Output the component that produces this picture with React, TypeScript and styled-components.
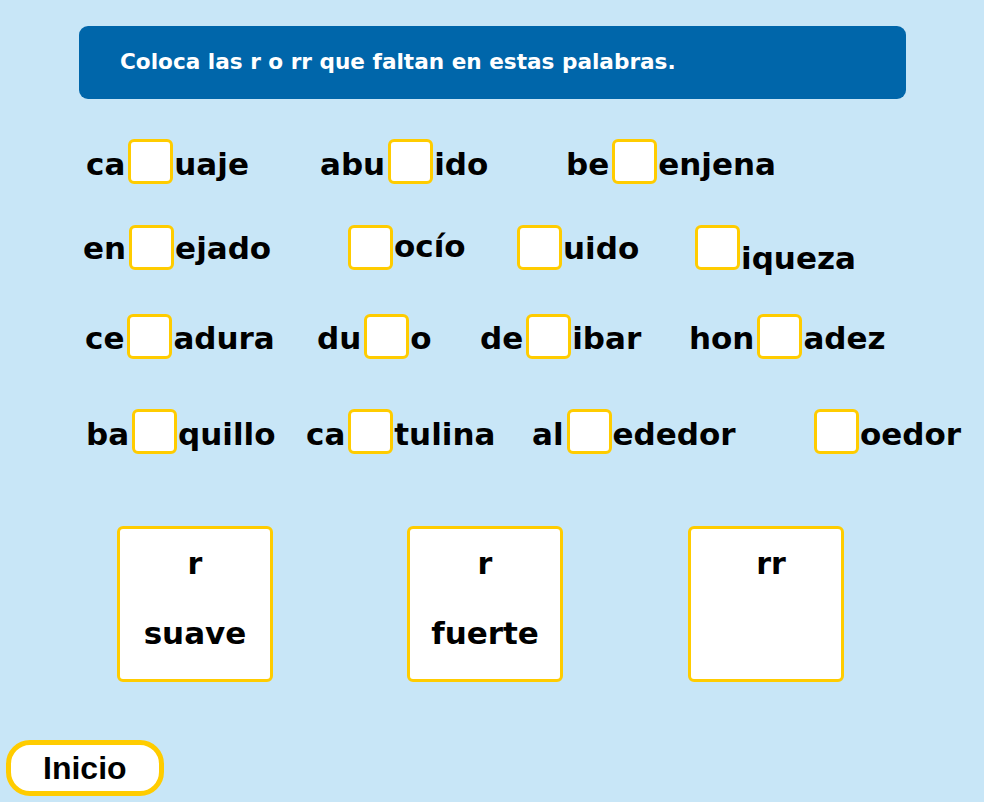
import React from 'react'
import styled, { createGlobalStyle } from 'styled-components'

const GlobalStyle = createGlobalStyle`
  html, body {
    margin: 0;
    padding: 0;
    background: #c8e6f7;
  }
  body {
    font-family: 'DejaVu Sans', Verdana, sans-serif;
  }
`

interface Piece {
  before?: string
  after?: string
  lift?: number
}

interface RowData {
  top: number
  pad: number
  cols: string
  words: Piece[]
}

const rows: RowData[] = [
  {
    top: 40,
    pad: 86,
    cols: '234px 246px auto',
    words: [
      { before: 'ca', after: 'uaje' },
      { before: 'abu', after: 'ido' },
      { before: 'be', after: 'enjena' },
    ],
  },
  {
    top: 41,
    pad: 83,
    cols: '262px 169px 178px auto',
    words: [
      { before: 'en', after: 'ejado', lift: 11 },
      { after: 'ocío', lift: 13 },
      { after: 'uido', lift: 11 },
      { after: 'iqueza', lift: 1 },
    ],
  },
  {
    top: 44,
    pad: 85,
    cols: '232px 163px 209px auto',
    words: [
      { before: 'ce', after: 'adura', lift: 10 },
      { before: 'du', after: 'o', lift: 10 },
      { before: 'de', after: 'ibar', lift: 10 },
      { before: 'hon', after: 'adez', lift: 10 },
    ],
  },
  {
    top: 50,
    pad: 86,
    cols: '220px 226px 279px auto',
    words: [
      { before: 'ba', after: 'quillo' },
      { before: 'ca', after: 'tulina' },
      { before: 'al', after: 'ededor' },
      { after: 'oedor' },
    ],
  },
]

const cards = [
  { letter: 'r', label: 'suave' },
  { letter: 'r', label: 'fuerte' },
  { letter: 'rr', label: '', shift: 10 },
]

const App: React.FC = () => {
  return (
    <Page>
      <GlobalStyle />
      <Header>
        <Title>Coloca las r o rr que faltan en estas palabras.</Title>
      </Header>
      {rows.map((row, i) => (
        <WordRow key={i} top={row.top} pad={row.pad} cols={row.cols}>
          {row.words.map((w, j) => (
            <Word key={j}>
              {w.before && <Part lift={w.lift ?? 9}>{w.before}</Part>}
              <Blank />
              {w.after && <Part lift={w.lift ?? 9}>{w.after}</Part>}
            </Word>
          ))}
        </WordRow>
      ))}
      <CardRow>
        {cards.map((c, i) => (
          <Card key={i}>
            <Letter shift={c.shift ?? 0}>{c.letter}</Letter>
            {c.label && <Label>{c.label}</Label>}
          </Card>
        ))}
      </CardRow>
      <HomeButton>Inicio</HomeButton>
    </Page>
  )
}

const Page = styled.div`
  width: 984px;
  height: 802px;
  overflow: hidden;
  background: #c8e6f7;
  padding-top: 26px;
  box-sizing: border-box;
`

const Header = styled.div`
  margin-left: 79px;
  width: 827px;
  height: 73px;
  background: #0066aa;
  border-radius: 9px;
  display: flex;
  align-items: center;
  padding-left: 41px;
  box-sizing: border-box;
`

const Title = styled.div`
  color: #fff;
  font-weight: bold;
  font-size: 21.6px;
  margin-top: -2px;
`

const WordRow = styled.div<{ top: number; pad: number; cols: string }>`
  display: grid;
  grid-template-columns: ${p => p.cols};
  padding-left: ${p => p.pad}px;
  margin-top: ${p => p.top}px;
  height: 45px;
`

const Word = styled.div`
  display: flex;
  align-items: flex-end;
  height: 45px;
`

const Part = styled.span<{ lift: number }>`
  font-size: 31px;
  font-weight: bold;
  color: #000;
  line-height: 1;
  margin-bottom: ${p => p.lift - 5}px;
  white-space: nowrap;
`

const Blank = styled.span`
  width: 45px;
  height: 45px;
  box-sizing: border-box;
  margin: 0 1px 0 3px;
  background: #fff;
  border: 3px solid #ffcc00;
  border-radius: 6px;
  flex-shrink: 0;
`

const CardRow = styled.div`
  display: grid;
  grid-template-columns: 290px 281px 156px;
  padding-left: 117px;
  margin-top: 72px;
`

const Card = styled.div`
  width: 156px;
  height: 156px;
  box-sizing: border-box;
  background: #fff;
  border: 3px solid #ffcc00;
  border-radius: 6px;
  display: flex;
  flex-direction: column;
  align-items: center;
  padding-top: 20px;
`

const Letter = styled.div<{ shift: number }>`
  font-size: 30px;
  font-weight: bold;
  line-height: 1;
  color: #000;
  padding-left: ${p => p.shift}px;
`

const Label = styled.div`
  font-size: 31px;
  font-weight: bold;
  line-height: 1;
  color: #000;
  margin-top: 39px;
`

const HomeButton = styled.div`
  margin: 58px 0 0 6px;
  width: 158px;
  height: 56px;
  box-sizing: border-box;
  background: #fff;
  border: 5px solid #ffcc00;
  border-radius: 24px;
  padding-left: 32px;
  display: flex;
  align-items: center;
  font-family: 'Liberation Sans', Arial, sans-serif;
  font-weight: bold;
  font-size: 32px;
  color: #000;
`

export default App
